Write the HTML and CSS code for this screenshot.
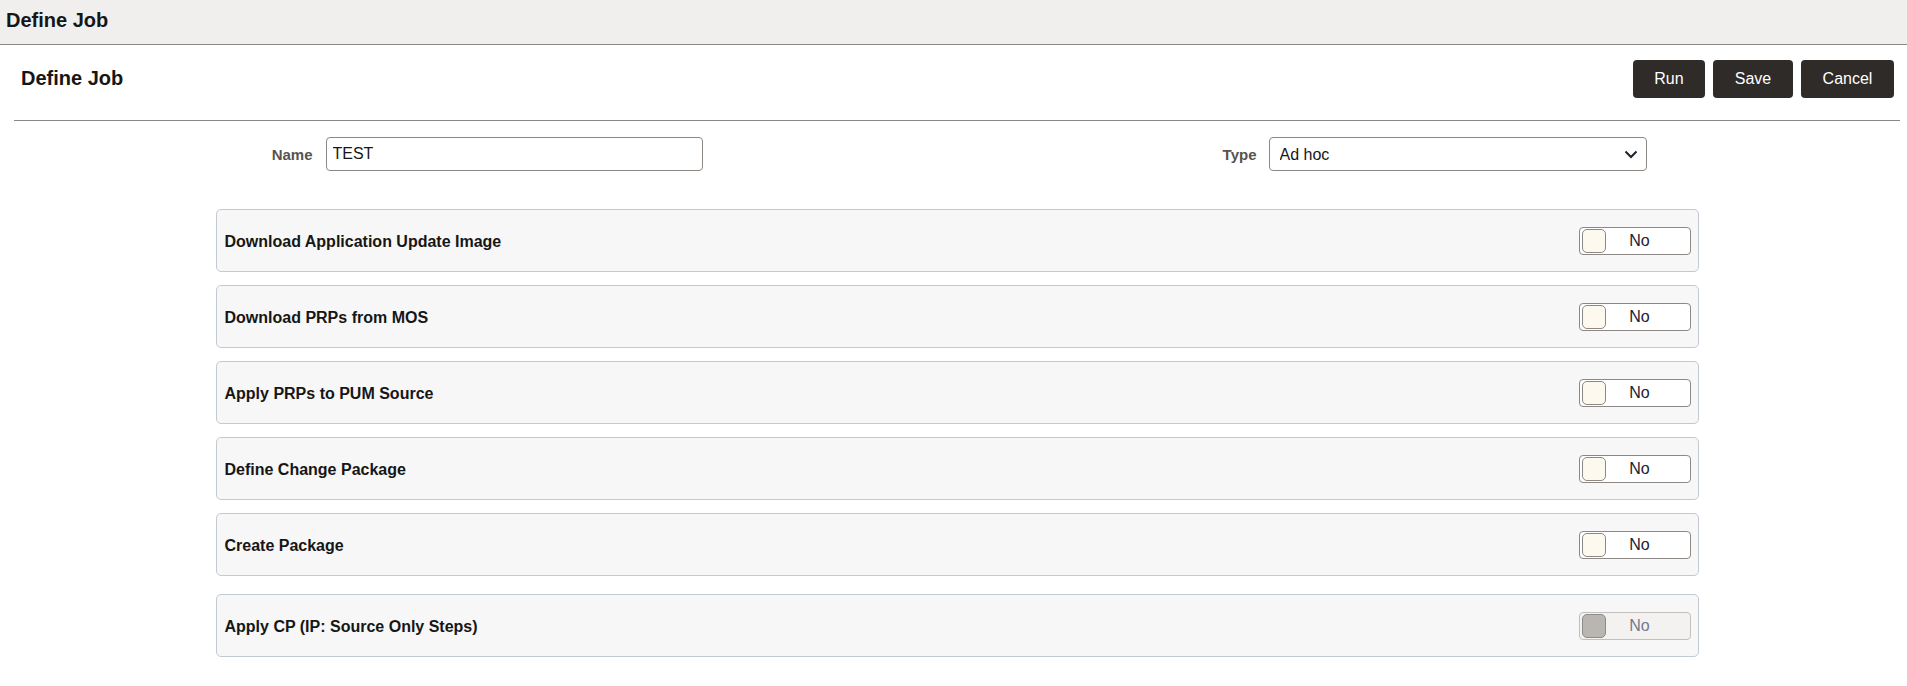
FILE: index.html
```
<!DOCTYPE html>
<html lang="en">

<head>
    <meta charset="UTF-8">
    <meta name="viewport" content="width=device-width, initial-scale=1.0">
    <title>Define Job</title>
    <link rel="stylesheet" href="styles.css">
</head>

<body>
    <div class="topbar">Define Job</div>

    <div class="page-head">
        <h1>Define Job</h1>
        <div class="actions">
            <button class="btn run">Run</button>
            <button class="btn save">Save</button>
            <button class="btn cancel">Cancel</button>
        </div>
    </div>

    <div class="content">
        <!-- Name / Type -->
        <div class="fields">
            <div class="field name-field">
                <label for="name">Name</label>
                <input id="name" type="text" value="TEST">
            </div>
            <div class="field type-field">
                <label for="type">Type</label>
                <div class="select-wrap">
                    <select id="type">
                        <option>Ad hoc</option>
                    </select>
                    <svg class="chevron" width="14" height="9" viewBox="0 0 14 9">
                        <path d="M1.5 1.5 L7 7 L12.5 1.5" fill="none" stroke="#222" stroke-width="2" />
                    </svg>
                </div>
            </div>
        </div>

        <!-- Steps -->
        <div class="step">
            <span class="step-label">Download Application Update Image</span>
            <div class="toggle"><span class="knob"></span><span class="toggle-text">No</span></div>
        </div>
        <div class="step">
            <span class="step-label">Download PRPs from MOS</span>
            <div class="toggle"><span class="knob"></span><span class="toggle-text">No</span></div>
        </div>
        <div class="step">
            <span class="step-label">Apply PRPs to PUM Source</span>
            <div class="toggle"><span class="knob"></span><span class="toggle-text">No</span></div>
        </div>
        <div class="step">
            <span class="step-label">Define Change Package</span>
            <div class="toggle"><span class="knob"></span><span class="toggle-text">No</span></div>
        </div>
        <div class="step">
            <span class="step-label">Create Package</span>
            <div class="toggle"><span class="knob"></span><span class="toggle-text">No</span></div>
        </div>
        <div class="step last">
            <span class="step-label">Apply CP (IP: Source Only Steps)</span>
            <div class="toggle disabled"><span class="knob"></span><span class="toggle-text">No</span></div>
        </div>
    </div>
</body>

</html>
```

FILE: styles.css
```
body {
    margin: 0;
    font-family: "Liberation Sans", Arial, sans-serif;
    color: #161616;
    background-color: #fff;
}

.topbar {
    height: 45px;
    box-sizing: border-box;
    padding: 9px 0 0 6px;
    background-color: #f0efed;
    border-bottom: 1px solid #8d8884;
    font-size: 20px;
    font-weight: bold;
    color: #161616;
}

.page-head {
    display: flex;
    align-items: center;
    justify-content: space-between;
    margin: 1px 7px 0 14px;
    padding: 14px 6px 22px 7px;
    border-bottom: 1px solid #8d8884;
}

h1 {
    margin: 0;
    font-size: 20px;
    font-weight: bold;
    position: relative;
    top: -1px;
}

.actions {
    display: flex;
    gap: 8px;
}

.btn {
    height: 38px;
    border: none;
    border-radius: 4px;
    background-color: #2f2b29;
    color: #fff;
    font-family: "Liberation Sans", Arial, sans-serif;
    font-size: 16px;
    padding: 0;
}

.run { width: 72px; }
.save { width: 80px; }
.cancel { width: 93px; }

.content {
    width: 1483px;
    margin-left: calc(50% - 738px);
}

.fields {
    display: flex;
    justify-content: space-between;
    margin-top: 16px;
    margin-bottom: 38px;
    padding-right: 52px;
}

.field {
    display: flex;
    align-items: center;
}

.field label {
    font-size: 15px;
    font-weight: bold;
    color: #575350;
    text-align: right;
}

.name-field label {
    width: 97px;
    margin-right: 13px;
}

.type-field label {
    margin-right: 12px;
}

.field input,
.field select {
    box-sizing: border-box;
    height: 34px;
    border: 1px solid #8d8884;
    border-radius: 4px;
    font-family: "Liberation Sans", Arial, sans-serif;
    font-size: 16px;
    color: #161616;
    background-color: #fff;
}

.field input {
    width: 377px;
    padding: 0 6px;
}

.select-wrap {
    position: relative;
}

.field select {
    width: 378px;
    padding: 0 10px;
    appearance: none;
    -webkit-appearance: none;
}

.chevron {
    position: absolute;
    right: 9px;
    top: 13px;
    pointer-events: none;
}

.step {
    display: flex;
    align-items: center;
    justify-content: space-between;
    box-sizing: border-box;
    height: 63px;
    margin-bottom: 13px;
    padding: 0 7px 0 8px;
    background-color: #f7f7f7;
    border: 1px solid #c3c9d1;
    border-radius: 5px;
}

.step.last {
    margin-top: 18px;
}

.step-label {
    font-size: 16px;
    font-weight: bold;
    position: relative;
    top: 1px;
}

.toggle {
    display: flex;
    align-items: center;
    box-sizing: border-box;
    width: 112px;
    height: 28px;
    padding: 0 2px;
    background-color: #fff;
    border: 1px solid #8d8884;
    border-radius: 4px;
}

.knob {
    box-sizing: border-box;
    width: 24px;
    height: 24px;
    background-color: #fdf9ee;
    border: 1px solid #8d8884;
    border-radius: 5px;
}

.toggle-text {
    flex: 1;
    text-align: center;
    font-size: 16px;
    color: #1b2234;
    padding-right: 14px;
}

.toggle.disabled {
    background-color: #f3f2f1;
    border-color: #c2bfbc;
}

.toggle.disabled .knob {
    background-color: #b9b5b1;
    border-color: #8f8b87;
}

.toggle.disabled .toggle-text {
    color: #6f7a8f;
}
```
